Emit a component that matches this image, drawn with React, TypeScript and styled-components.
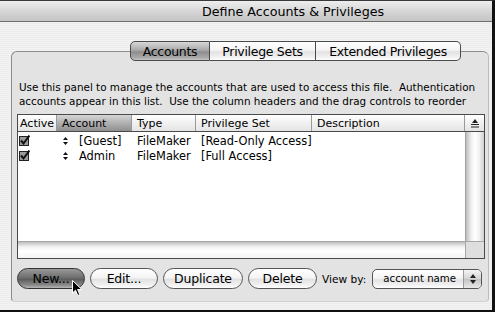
import styled, { createGlobalStyle, css } from 'styled-components'

const GlobalStyle = createGlobalStyle`
  html, body { margin: 0; padding: 0; background: #fff; }
  body { font-family: "DejaVu Sans", "Liberation Sans", sans-serif; color: #000; }
`

const aquaFace = css`
  background: linear-gradient(to bottom, #ffffff 0%, #f4f4f4 45%, #e2e2e2 55%, #f2f2f2 85%, #ffffff 100%);
`

const Window = styled.div`
  position: relative;
  width: 495px;
  height: 312px;
  box-sizing: border-box;
  overflow: hidden;
  display: flex;
  flex-direction: column;
  border-top: 1px solid #3a3a3a;
  border-right: 3px solid #111;
  border-bottom: 2px solid #111;
  background: repeating-linear-gradient(to bottom, #ececec 0 1px, #f3f3f3 1px 2px);
`

const TitleBar = styled.div`
  height: 21px;
  flex: none;
  display: flex;
  align-items: center;
  justify-content: center;
  padding-left: 94px;
  box-sizing: border-box;
  border-bottom: 1px solid #6c6c6c;
  background: linear-gradient(to bottom, #eeeeee, #d2d2d2 60%, #c6c6c6);
  font-size: 12.7px;
`

const Body = styled.div`
  flex: 1;
  display: flex;
  flex-direction: column;
  padding: 19px 3px 8px 11px;
`

const TabRow = styled.div`
  display: flex;
  padding-left: 119px;
  position: relative;
  z-index: 1;
`

const Tab = styled.div<{ $active?: boolean }>`
  height: 20px;
  box-sizing: border-box;
  display: flex;
  align-items: center;
  justify-content: center;
  font-size: 12.5px;
  letter-spacing: -0.3px;
  border: 1px solid #4a4a4a;
  border-left-width: 0;
  ${aquaFace}
  &:first-child { border-left-width: 1px; border-radius: 5px 0 0 5px; }
  &:last-child { border-radius: 0 5px 5px 0; }
  ${p => p.$active && css`
    background: linear-gradient(to bottom, #d8d8d8 0%, #a9a9a9 45%, #8e8e8e 55%, #a6a6a6 85%, #c4c4c4 100%);
  `}
`

const GroupBox = styled.div`
  flex: 1;
  margin-top: -10px;
  width: 478px;
  box-sizing: border-box;
  border: 1px solid #8c8c8c;
  border-bottom-color: #d0d0d0;
  border-right-color: #bdbdbd;
  border-radius: 6px 6px 4px 4px;
  background: #e3e3e3;
  padding: 28px 0 0 5px;
  display: flex;
  flex-direction: column;
`

const Description = styled.p`
  margin: 0 0 6px 2px;
  font-size: 10.4px;
  line-height: 14px;
  white-space: nowrap;
`

const Table = styled.div`
  width: 468px;
  height: 145px;
  box-sizing: border-box;
  border: 1px solid #4a4a4a;
  background: #fff;
  display: grid;
  grid-template-rows: 17px 1fr 17px;
`

const COLS = '39px 75px 64px 116px 153px 19px'

const HeaderRow = styled.div`
  display: grid;
  grid-template-columns: ${COLS};
  border-bottom: 1px solid #4a4a4a;
`

const HeaderCell = styled.div<{ $active?: boolean }>`
  display: flex;
  align-items: center;
  padding-left: 5px;
  font-size: 11px;
  white-space: nowrap;
  overflow: hidden;
  border-right: 1px solid #9a9a9a;
  background: linear-gradient(to bottom, #ffffff, #f1f1f1 50%, #e4e4e4);
  ${p => p.$active && css`
    background: linear-gradient(to bottom, #d6d6d6, #b0b0b0 50%, #8f8f8f);
  `}
  &:first-child { padding-left: 2px; }
  &:last-child { border-right: none; justify-content: center; padding-left: 0; }
`

const ListArea = styled.div`
  display: grid;
  grid-template-columns: 1fr 19px;
  min-height: 0;
`

const Rows = styled.div`
  padding-top: 1px;
`

const Row = styled.div`
  display: grid;
  grid-template-columns: 39px 75px 64px 116px 153px;
  height: 15px;
  align-items: center;
  font-size: 11.4px;
`

const Cell = styled.div<{ $pad?: number }>`
  display: flex;
  align-items: center;
  gap: 11px;
  padding-left: ${p => p.$pad ?? 5}px;
  white-space: nowrap;
`

const VScroll = styled.div`
  border-left: 1px solid #a0a0a0;
  background: linear-gradient(to right, #bdbdbd, #f0f0f0 30%, #ffffff 50%, #f0f0f0 75%, #cfcfcf);
`

const HScrollRow = styled.div`
  display: grid;
  grid-template-columns: 1fr 19px;
  border-top: 1px solid #a8a8a8;
`

const HScroll = styled.div`
  background: linear-gradient(to bottom, #bdbdbd, #f2f2f2 30%, #ffffff 55%, #f4f4f4);
`

const Corner = styled.div`
  background: #dedede;
  border-left: 1px solid #a8a8a8;
`

const ButtonRow = styled.div`
  display: flex;
  align-items: center;
  gap: 5px;
  margin-top: 9px;
`

const PillButton = styled.div<{ $w: number; $pressed?: boolean }>`
  width: ${p => p.$w}px;
  height: 21px;
  box-sizing: border-box;
  border: 1px solid #555;
  border-radius: 11px;
  display: flex;
  align-items: center;
  justify-content: center;
  font-size: 12.5px;
  letter-spacing: -0.2px;
  ${aquaFace}
  ${p => p.$pressed && css`
    border-color: #333;
    background: linear-gradient(to bottom, #9a9a9a 0%, #6e6e6e 45%, #5e5e5e 55%, #8a8a8a 85%, #b8b8b8 100%);
  `}
`

const Label = styled.span`
  font-size: 10.6px;
  margin-left: 0;
`

const Popup = styled.div`
  width: 110px;
  height: 20px;
  box-sizing: border-box;
  margin-left: 1px;
  border: 1px solid #555;
  border-radius: 5px;
  display: flex;
  align-items: stretch;
  ${aquaFace}
  overflow: hidden;
`

const PopupText = styled.span`
  flex: 1;
  display: flex;
  align-items: center;
  padding-left: 10px;
  font-size: 10.2px;
  white-space: nowrap;
`

const PopupArrows = styled.span`
  width: 17px;
  display: flex;
  align-items: center;
  justify-content: center;
  border-left: 1px solid #9a9a9a;
  background: linear-gradient(to bottom, #f4f4f4, #d4d4d4 50%, #c4c4c4 52%, #e8e8e8);
`

const Cursor = styled.svg`
  position: absolute;
  left: 72px;
  top: 279px;
  z-index: 2;
`

const CheckBox = () => (
  <svg width="11" height="11" viewBox="0 0 11 11">
    <rect x="0.5" y="1.5" width="9" height="9" fill="#9a9a9a" stroke="#222" />
    <path d="M2 5.5 L4.5 8.5 L10.5 0.5" fill="none" stroke="#111" strokeWidth="2" />
  </svg>
)

const DragHandle = () => (
  <svg width="5" height="8" viewBox="0 0 5 8">
    <path d="M2.5 0 L5 3 L0 3 Z M0 5 L5 5 L2.5 8 Z" fill="#111" />
  </svg>
)

const SortIcon = () => (
  <svg width="8" height="9" viewBox="0 0 8 9">
    <path d="M4 0 L7 4 L1 4 Z" fill="#222" />
    <rect x="0" y="5" width="8" height="1" fill="#222" />
    <rect x="0" y="7.5" width="8" height="1" fill="#222" />
  </svg>
)

const StepArrows = () => (
  <svg width="6" height="10" viewBox="0 0 6 10">
    <path d="M3 0 L6 4 L0 4 Z M0 6 L6 6 L3 10 Z" fill="#222" />
  </svg>
)

const headers = ['Active', 'Account', 'Type', 'Privilege Set', 'Description']

const accounts = [
  { name: '[Guest]', type: 'FileMaker', privs: '[Read-Only Access]' },
  { name: 'Admin', type: 'FileMaker', privs: '[Full Access]' },
]

export default function App() {
  return (
    <>
      <GlobalStyle />
      <Window>
        <TitleBar>Define Accounts &amp; Privileges</TitleBar>
        <Body>
          <TabRow>
            <Tab $active style={{ width: 80 }}>Accounts</Tab>
            <Tab style={{ width: 106 }}>Privilege Sets</Tab>
            <Tab style={{ width: 145 }}>Extended Privileges</Tab>
          </TabRow>
          <GroupBox>
            <Description>
              Use this panel to manage the accounts that are used to access this file.&nbsp; Authentication<br />
              accounts appear in this list.&nbsp; Use the column headers and the drag controls to reorder
            </Description>
            <Table>
              <HeaderRow>
                {headers.map(h => (
                  <HeaderCell key={h} $active={h === 'Account'}>{h}</HeaderCell>
                ))}
                <HeaderCell><SortIcon /></HeaderCell>
              </HeaderRow>
              <ListArea>
                <Rows>
                  {accounts.map(a => (
                    <Row key={a.name}>
                      <Cell $pad={1}><CheckBox /></Cell>
                      <Cell $pad={6}><DragHandle />{a.name}</Cell>
                      <Cell>{a.type}</Cell>
                      <Cell>{a.privs}</Cell>
                      <Cell />
                    </Row>
                  ))}
                </Rows>
                <VScroll />
              </ListArea>
              <HScrollRow>
                <HScroll />
                <Corner />
              </HScrollRow>
            </Table>
            <ButtonRow>
              <PillButton $w={68} $pressed>New...</PillButton>
              <PillButton $w={68}>Edit...</PillButton>
              <PillButton $w={80}>Duplicate</PillButton>
              <PillButton $w={69}>Delete</PillButton>
              <Label>View by:</Label>
              <Popup>
                <PopupText>account name</PopupText>
                <PopupArrows><StepArrows /></PopupArrows>
              </Popup>
            </ButtonRow>
          </GroupBox>
        </Body>
        <Cursor width="11" height="17" viewBox="0 0 11 17">
          <path d="M0.5 0.5 L0.5 13 L3.5 10.2 L5.8 15.5 L7.8 14.6 L5.6 9.5 L9.8 9.5 Z" fill="#000" stroke="#fff" strokeWidth="1" />
        </Cursor>
      </Window>
    </>
  )
}
